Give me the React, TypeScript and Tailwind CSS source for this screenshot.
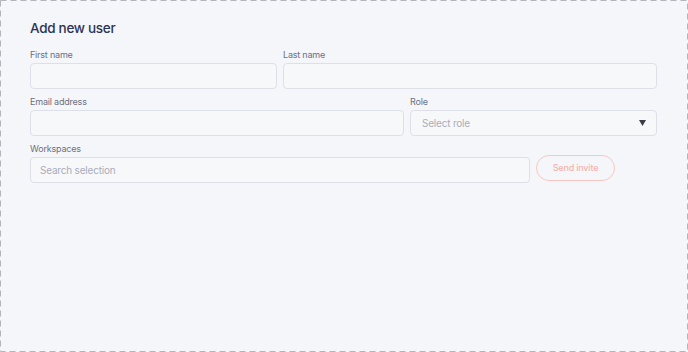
export default function App() {
  return (
    <div className="relative h-[352px] w-[688px] overflow-hidden bg-[#f5f6f9] font-['Inter',sans-serif]">
      {/* dashed frame */}
      <svg className="pointer-events-none absolute inset-0" width="688" height="352">
        <rect x="0.5" y="0.5" width="687" height="351" fill="none" stroke="#b3b5ba" strokeDasharray="6 4" />
      </svg>

      <div className="pl-[30px] pr-[31px] pt-[18px]">
        <h1 className="h-[20px] text-[13.5px] font-medium leading-[20px] tracking-[-0.3px] text-[#2b3355]">
          Add new user
        </h1>

        <div className="mt-[10px] grid grid-cols-[247px_1fr] gap-x-[6px]">
          <Field label="First name" />
          <Field label="Last name" />
        </div>

        <div className="mt-[6px] grid grid-cols-[1fr_247px] gap-x-[6px]">
          <Field label="Email address" />
          <div>
            <p className="h-[14px] text-[9px] leading-[14px] tracking-[-0.2px] text-[#6c7183]">Role</p>
            <div className="mt-[1px] flex h-[26px] items-center justify-between rounded-[4px] border border-[#dde0e8] bg-[#f7f8fa] pl-[11px] pr-[10px]">
              <span className="text-[10px] tracking-[-0.2px] text-[#a9adba]">Select role</span>
              <svg width="7" height="6" viewBox="0 0 7 6">
                <path d="M0 0h7L3.5 6z" fill="#3a3d45" />
              </svg>
            </div>
          </div>
        </div>

        <div className="mt-[6px] flex items-end gap-x-[6px]">
          <div className="w-[500px]">
            <p className="h-[14px] text-[9px] leading-[14px] tracking-[-0.2px] text-[#6c7183]">Workspaces</p>
            <div className="mt-[1px] flex h-[26px] items-center rounded-[4px] border border-[#dde0e8] bg-[#f7f8fa] px-[9px]">
              <span className="text-[10px] tracking-[-0.2px] text-[#a9adba]">Search selection</span>
            </div>
          </div>
          <button className="mb-[2px] h-[26px] w-[79px] rounded-full border border-[#f9c7c3] text-[9px] font-medium tracking-[-0.2px] text-[#f7b3ad]">
            Send invite
          </button>
        </div>
      </div>
    </div>
  );
}

function Field({ label }: { label: string }) {
  return (
    <div>
      <p className="h-[14px] text-[9px] leading-[14px] tracking-[-0.2px] text-[#6c7183]">{label}</p>
      <div className="mt-[1px] h-[26px] rounded-[4px] border border-[#dde0e8] bg-[#f7f8fa]" />
    </div>
  );
}
